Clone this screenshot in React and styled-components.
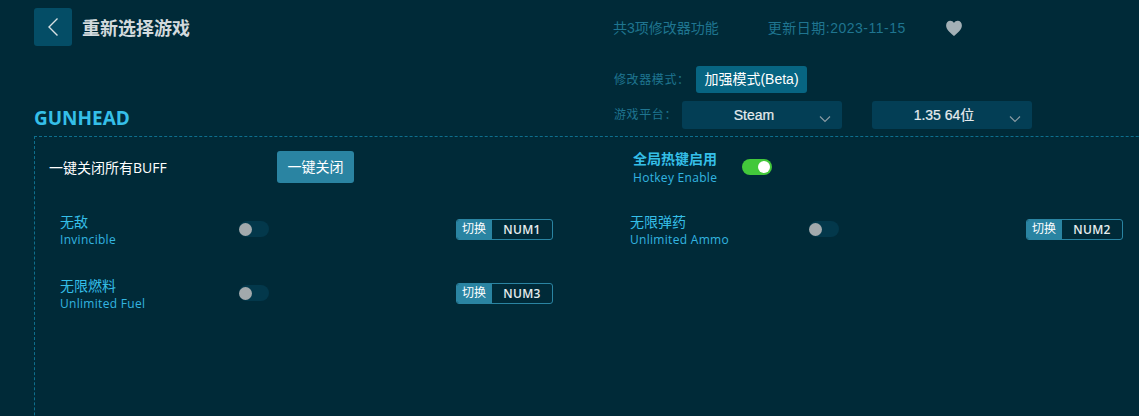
import React from "react";
import styled, { createGlobalStyle } from "styled-components";

const Global = createGlobalStyle`
  html, body { margin: 0; padding: 0; background: #002a38; }
  * { box-sizing: border-box; }
`;
const Page = styled.div`
  width: 1139px; height: 416px; overflow: hidden; background: #002a38;
  padding: 8px 0 0 34px;
  font-family: "Open Sans", "Noto Sans CJK SC", sans-serif;
`;
const Header = styled.header`display: flex; align-items: center; height: 38px;`;
const BackButton = styled.div`
  width: 38px; height: 38px; border-radius: 3px; background: #044d66;
  display: flex; align-items: center; justify-content: center;
`;
const PageTitle = styled.h1`
  margin: 2px 0 0 10px; width: 531px; font-size: 18px; font-weight: 700; color: #d3dadd; line-height: 24px;
`;
const Meta = styled.span`
  font-family: "Liberation Sans", "Noto Sans CJK SC", sans-serif; padding-top: 2px;
  font-size: 14px; color: #1f7590; line-height: 20px; margin-right: ${p => p.$gap}px; letter-spacing: ${p => p.$ls || 0}px;
`;
const Heart = styled.svg`width: 18px; height: 18px; display: block; margin: 2px 0 0 -1px;`;
const Middle = styled.div`display: flex; height: 70px; margin-top: 20px;`;
const GameName = styled.h2`
  margin: 0; width: 579px; align-self: flex-end; font-size: 19px; line-height: 24px; font-weight: 700; color: #35bfe8;
  padding-bottom: 6px;
`;
const Options = styled.div`display: flex; flex-direction: column; gap: 8px; padding-left: 1px;`;
const OptionRow = styled.div`display: flex; align-items: center;`;
const OptionLabel = styled.span`font-size: 12px; color: #1f7590; width: ${p => p.$w}px; line-height: 16px; letter-spacing: .6px; white-space: nowrap;`;
const ModeBadge = styled.div`
  height: 27px; padding: 0 7px; border-radius: 3px; background: #076582; color: #fff; font-size: 14px; line-height: 27px;
  font-family: "Liberation Sans", "Noto Sans CJK SC", sans-serif; width: 111px; text-align: center; white-space: nowrap;
`;
const Select = styled.div`
  width: 160px; height: 28px; border-radius: 3px; background: #033e55; color: #e6ecee; font-size: 14px;
  font-family: "Liberation Sans", "Noto Sans CJK SC", sans-serif; -webkit-text-stroke: .2px #e6ecee;
  margin-right: ${p => p.$mr || 0}px; position: relative; text-align: center; line-height: 28px; padding-right: 16px;
`;
const Chevron = styled.svg`position: absolute; right: 11px; top: 14px; width: 12px; height: 8px;`;
const Panel = styled.section`
  width: 1300px; height: 400px; border-top: 1px dashed #0e6f8d; border-left: 1px dashed #0e6f8d;
  padding: 14px 0 0 14px;
`;
const TopRow = styled.div`display: flex; align-items: center; height: 32px;`;
const AllLabel = styled.span`width: 228px; font-size: 14px; color: #fff;`;
const OffButton = styled.div`
  width: 77px; height: 32px; border-radius: 3px; background: #2a84a2; color: #fff; font-size: 14px; line-height: 32px; text-align: center;
`;
const Cn = styled.div`font-size: 14px; line-height: ${p => p.$bold ? 18 : 20}px; color: #35bfe8; font-weight: ${p => p.$bold ? 700 : 400};`;
const En = styled.div`font-size: 12px; line-height: 18px; color: #33b5e0; letter-spacing: .3px;`;
const GlobalLabel = styled.div`
  margin-left: 279px; width: 109px; padding-top: 3px;
  ${En} { margin-top: 1px; }
`;
const Toggle = styled.div`
  width: 30px; height: 16px; border-radius: 8px; background: ${p => p.$on ? "#43c83b" : "#03384b"}; position: relative; flex: none;
  &::after {
    content: ""; position: absolute; top: ${p => p.$on ? 2 : 1.5}px; border-radius: 50%;
    ${p => p.$on ? "right: 2px; width: 12px; height: 12px; background: #fff;" : "left: 0; width: 13px; height: 13px; background: #a2a9ac;"}
  }
`;
const Features = styled.div`
  display: grid; grid-template-columns: repeat(2, 494px); column-gap: 76px; row-gap: 24px; margin: 26px 0 0 10px;
`;
const Feature = styled.div`display: flex; align-items: center; height: 40px;`;
const FeatureLabel = styled.div`
  width: 180px; padding: 3px 0 0 1px;
  ${En} { margin-top: -1px; }
`;
const Key = styled.div`
  margin-left: auto; width: 97px; height: 21px; border-radius: 3px; border: 1px solid #2a84a2; display: flex; overflow: hidden;
`;
const KeyTag = styled.span`
  width: 36px; background: #2a84a2; color: #fff; font-size: 12px; line-height: 18px; text-align: center; margin: -1px 0 -1px -1px; padding-top: 1px;
`;
const KeyName = styled.span`flex: 1; color: #e6ecee; font-size: 12px; font-weight: 600; line-height: 19px; text-align: center; letter-spacing: .3px;`;

const features = [
  ["无敌", "Invincible", "NUM1"],
  ["无限弹药", "Unlimited Ammo", "NUM2"],
  ["无限燃料", "Unlimited Fuel", "NUM3"],
];
const ChevronIcon = () => (
  <Chevron viewBox="0 0 12 8" fill="none" stroke="#8a9aa3" strokeWidth="1.2"><path d="M1 1.5 6 6.5 11 1.5" /></Chevron>
);

export default function App() {
  return (
    <Page>
      <Global />
      <Header>
        <BackButton>
          <svg width="12" height="20" viewBox="0 0 12 20" fill="none" stroke="#d8e0e3" strokeWidth="1.4"><path d="M10.5 1.5 2 10l8.5 8.5" /></svg>
        </BackButton>
        <PageTitle>重新选择游戏</PageTitle>
        <Meta $gap={49}>共3项修改器功能</Meta>
        <Meta $gap={40} $ls={0.5}>更新日期:2023-11-15</Meta>
        <Heart viewBox="0 0 16 16"><path fill="#a3b0b6" d="M8 15C3.5 11.5 1 9 1 5.6 1 3.3 2.7 1.6 4.7 1.6 6 1.6 7.3 2.3 8 3.5 8.7 2.3 10 1.6 11.3 1.6 13.3 1.6 15 3.3 15 5.6 15 9 12.5 11.5 8 15Z" /></Heart>
      </Header>
      <Middle>
        <GameName>GUNHEAD</GameName>
        <Options>
          <OptionRow>
            <OptionLabel $w={82}>修改器模式：</OptionLabel>
            <ModeBadge>加强模式(Beta)</ModeBadge>
          </OptionRow>
          <OptionRow>
            <OptionLabel $w={68}>游戏平台：</OptionLabel>
            <Select $mr={30}>Steam<ChevronIcon /></Select>
            <Select>1.35 64位<ChevronIcon /></Select>
          </OptionRow>
        </Options>
      </Middle>
      <Panel>
        <TopRow>
          <AllLabel>一键关闭所有BUFF</AllLabel>
          <OffButton>一键关闭</OffButton>
          <GlobalLabel>
            <Cn $bold>全局热键启用</Cn>
            <En>Hotkey Enable</En>
          </GlobalLabel>
          <Toggle $on />
        </TopRow>
        <Features>
          {features.map(([cn, en, key]) => (
            <Feature key={key}>
              <FeatureLabel>
                <Cn>{cn}</Cn>
                <En>{en}</En>
              </FeatureLabel>
              <Toggle />
              <Key><KeyTag>切换</KeyTag><KeyName>{key}</KeyName></Key>
            </Feature>
          ))}
        </Features>
      </Panel>
    </Page>
  );
}
